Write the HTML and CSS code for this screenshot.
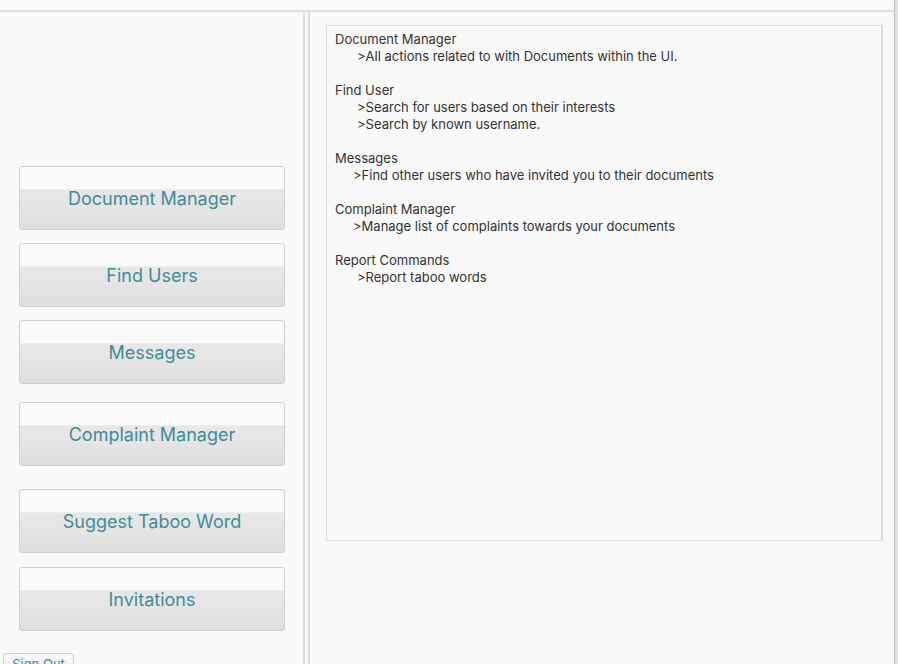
FILE: index.html
```html
<!DOCTYPE html>
<html>
<head>
<meta charset="utf-8">
<link rel="stylesheet" href="styles.css">
</head>
<body>
<div class="window">
  <div class="main">
    <div class="topbar"></div>
    <div class="panes">
      <div class="left">
        <button class="btn">Document Manager</button>
        <button class="btn">Find Users</button>
        <button class="btn">Messages</button>
        <button class="btn gap-md">Complaint Manager</button>
        <button class="btn gap-lg">Suggest Taboo Word</button>
        <button class="btn gap-sm">Invitations</button>
        <button class="signout">Sign Out</button>
      </div>
      <div class="divider"></div>
      <div class="right">
        <div class="textbox">
          <div class="line">Document Manager</div>
          <div class="line ind-a">&gt;All actions related to with Documents within the UI.</div>
          <div class="line blank"></div>
          <div class="line">Find User</div>
          <div class="line ind-a">&gt;Search for users based on their interests</div>
          <div class="line ind-a">&gt;Search by known username.</div>
          <div class="line blank"></div>
          <div class="line">Messages</div>
          <div class="line ind-b">&gt;Find other users who have invited you to their documents</div>
          <div class="line blank"></div>
          <div class="line">Complaint Manager</div>
          <div class="line ind-b">&gt;Manage list of complaints towards your documents</div>
          <div class="line blank"></div>
          <div class="line">Report Commands</div>
          <div class="line ind-a">&gt;Report taboo words</div>
        </div>
      </div>
    </div>
  </div>
  <div class="edge"></div>
</div>
</body>
</html>
```

FILE: styles.css
```css
* { box-sizing: border-box; }
html, body {
  margin: 0;
  padding: 0;
  width: 898px;
  height: 664px;
  overflow: hidden;
  background: #f9f9f9;
  font-family: Inter, "Liberation Sans", sans-serif;
}
.window {
  display: flex;
  width: 898px;
  height: 664px;
}
.main {
  flex: 1;
  display: flex;
  flex-direction: column;
  min-width: 0;
}
.topbar {
  height: 12px;
  border-bottom: 2px solid #e0e0e0;
  background: #fafafa;
  flex: none;
}
.panes {
  flex: 1;
  display: flex;
  min-height: 0;
}
.left {
  width: 303px;
  flex: none;
  display: flex;
  flex-direction: column;
  padding: 154px 19px 0 19px;
}
.btn {
  width: 266px;
  height: 64px;
  flex: none;
  margin: 0 0 13px 0;
  border: 1px solid #cfcfcf;
  border-radius: 3px;
  background: linear-gradient(#fbfbfb 0, #fafafa 35%, #e7e7e7 37%, #e4e4e4 72%, #dedede 100%);
  color: #3f8c9a;
  font-family: Inter, "Liberation Sans", sans-serif;
  font-size: 18px;
  padding: 0;
  text-align: center;
}
.gap-sm { margin-top: 1px; }
.gap-md { margin-top: 5px; }
.gap-lg { margin-top: 10px; }
.signout {
  align-self: flex-start;
  margin: 9px 0 0 -16px;
  width: 71px;
  height: 24px;
  flex: none;
  border: 1px solid #cfcfcf;
  border-radius: 3px;
  background: linear-gradient(#fbfbfb, #e6e6e6);
  color: #3f8c9a;
  font-family: Inter, "Liberation Sans", sans-serif;
  font-size: 13px;
  line-height: 13px;
  padding: 4px 0 0 0;
  text-align: center;
  display: flex;
  justify-content: center;
  align-items: flex-start;
}
.divider {
  width: 7px;
  flex: none;
  border-left: 2px solid #dddddd;
  border-right: 2px solid #dddddd;
}
.right {
  flex: 1;
  padding: 13px 11px 0 16px;
}
.textbox {
  height: 516px;
  border: 1px solid #dcdcdc;
  border-right-width: 2px;
  background: #f9f9f9;
  padding: 5px 8px;
  color: #333333;
  font-size: 13px;
  line-height: 17px;
}
.line { height: 17px; white-space: nowrap; }
.ind-a { padding-left: 22px; }
.ind-b { padding-left: 18px; }
.edge {
  width: 4px;
  flex: none;
  background: #e2e2e2;
  border-left: 1px solid #bdbdbd;
}
```
